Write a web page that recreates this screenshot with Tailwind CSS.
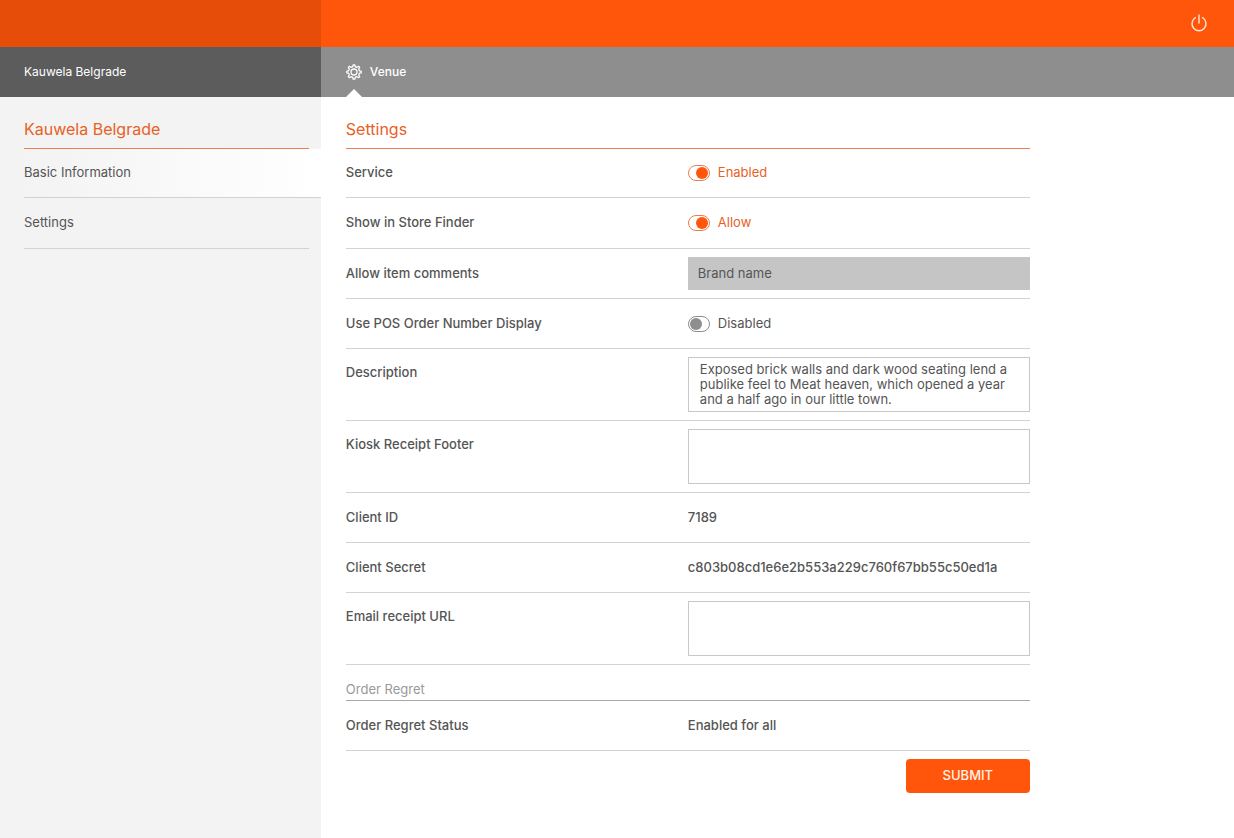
<!DOCTYPE html>
<html lang="en">
<head>
    <meta charset="UTF-8">
    <meta name="viewport" content="width=device-width, initial-scale=1.0">
    <title>Venue Settings</title>
    <script src="https://cdn.jsdelivr.net/npm/@tailwindcss/browser@4"></script>
</head>
<body class="min-h-screen flex flex-col bg-white font-['Inter','Open_Sans',sans-serif] text-[13px] text-[#555]">
    <!-- Top bar -->
    <header class="flex h-[47px] bg-[#ff560b]">
        <div class="w-[26%] bg-[#e54d08]"></div>
        <div class="flex flex-1 items-center justify-end pr-[26px] pb-[2px]">
            <button type="button" aria-label="Log out" class="text-[#ffe6d6]">
                <svg class="size-[18px]" viewBox="0 0 18 18" fill="none" stroke="currentColor" stroke-width="1.4" stroke-linecap="round">
                    <path d="M9 1v8"></path>
                    <path d="M5.4 3.7a7 7 0 1 0 7.2 0"></path>
                </svg>
            </button>
        </div>
    </header>

    <!-- Tabs -->
    <div class="flex h-[50px] text-xs text-white">
        <div class="flex w-[26%] items-center bg-[#5c5c5c] pl-6">Kauwela Belgrade</div>
        <nav class="flex flex-1 bg-[#8e8e8e] pl-[25px]">
            <a href="#" class="relative flex items-center gap-2 font-medium">
                <svg class="size-4" viewBox="0 0 16 16" fill="none" stroke="currentColor" stroke-width="1.3" stroke-linejoin="round">
                    <path d="M6.8 2.6 7.1.8h1.8l.3 1.8 1.8.7 1.5-1 1.2 1.2-1 1.5.7 1.8 1.8.3v1.8l-1.8.3-.7 1.8 1 1.5-1.2 1.2-1.5-1-1.8.7-.3 1.8H7.1l-.3-1.8-1.8-.7-1.5 1-1.2-1.2 1-1.5-.7-1.8L.8 8.9V7.1l1.8-.3.7-1.8-1-1.5 1.2-1.2 1.5 1z"></path>
                    <circle cx="8" cy="8" r="3"></circle>
                </svg>
                Venue
                <svg class="absolute bottom-0 left-0 h-2 w-4 text-white" viewBox="0 0 16 8" fill="currentColor">
                    <path d="M0 8 8 0l8 8z"></path>
                </svg>
            </a>
        </nav>
    </div>

    <div class="flex flex-1">
        <!-- Sidebar -->
        <aside class="w-[26%] bg-[#f3f3f3] pl-6">
            <h2 class="mr-3 flex h-[52px] items-center border-b border-[#e8814f] pt-3 text-base text-[#e8611f]">Kauwela Belgrade</h2>
            <nav>
                <a href="#" class="flex h-[49px] items-center border-b border-[#d2d2d2] bg-linear-to-r from-[#f3f3f3] to-white">Basic Information</a>
                <a href="#" class="mr-3 flex h-[51px] items-center border-b border-[#d2d2d2]">Settings</a>
            </nav>
        </aside>

        <!-- Settings form -->
        <main class="flex-1 px-[25px]">
            <form class="max-w-[684px]">
                <h2 class="flex h-[52px] items-center border-b border-[#e8814f] pt-3 text-base text-[#e8611f]">Settings</h2>

                <div class="grid grid-cols-2 border-b border-[#d2d2d2]">
                    <label for="service" class="flex h-12 items-center font-medium">Service</label>
                    <div class="flex items-center gap-2 text-[#e8611f]">
                        <input type="checkbox" id="service" checked class="h-4 w-[22px] appearance-none rounded-full border border-[#e8814f] p-px before:block before:size-3 before:rounded-full checked:before:ml-auto checked:before:bg-[#ff560b]">
                        <label for="service">Enabled</label>
                    </div>
                </div>

                <div class="grid grid-cols-2 border-b border-[#d2d2d2]">
                    <label for="store_finder" class="flex h-[50px] items-center font-medium">Show in Store Finder</label>
                    <div class="flex items-center gap-2 text-[#e8611f]">
                        <input type="checkbox" id="store_finder" checked class="h-4 w-[22px] appearance-none rounded-full border border-[#e8814f] p-px before:block before:size-3 before:rounded-full checked:before:ml-auto checked:before:bg-[#ff560b]">
                        <label for="store_finder">Allow</label>
                    </div>
                </div>

                <div class="grid grid-cols-2 border-b border-[#d2d2d2]">
                    <label for="item_comments" class="flex h-[49px] items-center font-medium">Allow item comments</label>
                    <input type="text" id="item_comments" value="Brand name" class="my-2 min-w-0 bg-[#c5c5c5] px-[10px]">
                </div>

                <div class="grid grid-cols-2 border-b border-[#d2d2d2]">
                    <label for="pos_number" class="flex h-[49px] items-center font-medium">Use POS Order Number Display</label>
                    <div class="flex items-center gap-2">
                        <input type="checkbox" id="pos_number" class="h-4 w-[22px] appearance-none rounded-full border border-[#8e8e8e] p-px before:block before:size-3 before:rounded-full before:bg-[#8e8e8e] checked:before:ml-auto">
                        <label for="pos_number">Disabled</label>
                    </div>
                </div>

                <div class="grid grid-cols-2 border-b border-[#d2d2d2]">
                    <label for="description" class="flex h-12 items-center font-medium">Description</label>
                    <textarea id="description" class="my-2 h-[55px] resize-none overflow-hidden border border-[#c8c8c8] py-1 pr-4 pl-[11px] leading-[15px]">Exposed brick walls and dark wood seating lend a publike feel to Meat heaven, which opened a year and a half ago in our little town.</textarea>
                </div>

                <div class="grid grid-cols-2 border-b border-[#d2d2d2]">
                    <label for="receipt_footer" class="flex h-12 items-center font-medium">Kiosk Receipt Footer</label>
                    <textarea id="receipt_footer" class="my-2 h-[55px] resize-none border border-[#c8c8c8] py-1 pr-4 pl-[11px] leading-[15px]"></textarea>
                </div>

                <div class="grid h-[50px] grid-cols-2 items-center border-b border-[#d2d2d2] font-medium">
                    <span>Client ID</span>
                    <span>7189</span>
                </div>

                <div class="grid h-[50px] grid-cols-2 items-center border-b border-[#d2d2d2] font-medium">
                    <span>Client Secret</span>
                    <span>c803b08cd1e6e2b553a229c760f67bb55c50ed1a</span>
                </div>

                <div class="grid grid-cols-2 border-b border-[#d2d2d2]">
                    <label for="receipt_url" class="flex h-12 items-center font-medium">Email receipt URL</label>
                    <textarea id="receipt_url" class="my-2 h-[55px] resize-none border border-[#c8c8c8] py-1 pr-4 pl-[11px] leading-[15px]"></textarea>
                </div>

                <h3 class="flex h-9 items-end border-b border-[#a8a8a8] pb-px text-[#999]">Order Regret</h3>

                <div class="grid h-[50px] grid-cols-2 items-center border-b border-[#d2d2d2] font-medium">
                    <span>Order Regret Status</span>
                    <span>Enabled for all</span>
                </div>

                <div class="flex justify-end pt-2">
                    <button type="submit" class="h-[34px] w-[124px] rounded bg-[#ff560b] font-medium text-[#fff3ea]">SUBMIT</button>
                </div>
            </form>
        </main>
    </div>
</body>
</html>
